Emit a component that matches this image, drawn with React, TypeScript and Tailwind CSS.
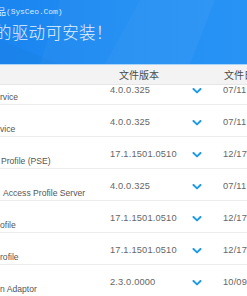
import React from "react";

const rows = [
  { name: "rvice", pad: "pl-0", ver: "4.0.0.325", date: "07/11" },
  { name: "vice", pad: "pl-0", ver: "4.0.0.325", date: "07/11" },
  { name: "Profile (PSE)", pad: "pl-[1px]", ver: "17.1.1501.0510", date: "12/17" },
  { name: "Access Profile Server", pad: "pl-[3px]", ver: "4.0.0.325", date: "07/11" },
  { name: "ofile", pad: "pl-0", ver: "17.1.1501.0510", date: "12/17" },
  { name: "rofile", pad: "pl-0", ver: "17.1.1501.0510", date: "12/17" },
  { name: "n Adaptor", pad: "pl-0", ver: "2.3.0.0000", date: "10/09" },
];

function Chevron() {
  return (
    <svg width="10" height="6" viewBox="0 0 10 6" fill="none">
      <path d="M1.5 1l3.5 3.4L8.5 1" stroke="#1f9be6" strokeWidth="2" strokeLinecap="round" strokeLinejoin="round" />
    </svg>
  );
}

export default function App() {
  return (
    <div className="w-[247px] h-[296px] overflow-hidden bg-white font-['Liberation_Sans',Arial,sans-serif]">
      {/* banner */}
      <div className="relative h-[64px] overflow-hidden bg-gradient-to-r from-[#1b85ef] via-[#1f8df3] to-[#2491f5]">
        <svg className="absolute inset-0" width="247" height="64" viewBox="0 0 247 64">
          <polygon points="60,0 140,0 105,64 40,64" fill="#ffffff" fillOpacity="0.03" />
          <polygon points="140,0 215,0 190,64 105,64" fill="#ffffff" fillOpacity="0.06" />
          <polygon points="215,0 247,0 247,64 190,64" fill="#ffffff" fillOpacity="0.02" />
          <polygon points="0,40 60,64 0,64" fill="#000000" fillOpacity="0.02" />
        </svg>
        <div className="relative flex flex-col">
          <div className="mt-[6px] ml-[-3px] h-[11px] flex items-center text-[8px] leading-[11px] text-[#d9ecff] font-['Liberation_Mono','Noto_Sans_CJK_SC',monospace]">
            <span className="text-[9px] font-['Noto_Sans_CJK_SC',sans-serif]">品</span>
            <span className="tracking-[-0.1px]">(SysCeo.Com)</span>
          </div>
          <div className="mt-[6px] ml-[-5px] text-[16.5px] leading-[18px] tracking-[0.3px] text-[#e4f1ff] font-['Noto_Sans_CJK_SC',sans-serif] font-light">
            的驱动可安装！
          </div>
        </div>
      </div>
      <div className="h-[1px] bg-[#a9d3f7]" />
      {/* table header */}
      <div className="h-[20px] flex items-center bg-[#f3f3f3] border-b border-[#e6e6e6] text-[10px] text-[#4a4a4a] font-['Noto_Sans_CJK_SC',sans-serif]">
        <div className="w-[119px] shrink-0" />
        <div className="w-[105px] shrink-0 leading-[12px]">文件版本</div>
        <div className="whitespace-nowrap leading-[12px]">文件日期</div>
      </div>
      {/* rows */}
      <div className="h-[211px] overflow-hidden">
        <div className="-mt-[12px]">
          {rows.map((r, i) => (
            <div key={i} className="h-[32px] flex border-b border-[#ececec]">
              <div className={`w-[110px] shrink-0 pt-[19px] text-[8.6px] leading-[11px] text-[#555] whitespace-nowrap ${r.pad}`}>
                {r.name}
              </div>
              <div className="w-[82px] shrink-0 pt-[11px] text-[9.3px] leading-[12px] text-[#666] tracking-[0.15px] whitespace-nowrap">
                {r.ver}
              </div>
              <div className="w-[10px] shrink-0 pt-[15px]">
                <Chevron />
              </div>
              <div className="ml-[21px] pt-[11px] text-[9.3px] leading-[12px] text-[#666] tracking-[0.15px] whitespace-nowrap">
                {r.date}
              </div>
            </div>
          ))}
        </div>
      </div>
    </div>
  );
}
